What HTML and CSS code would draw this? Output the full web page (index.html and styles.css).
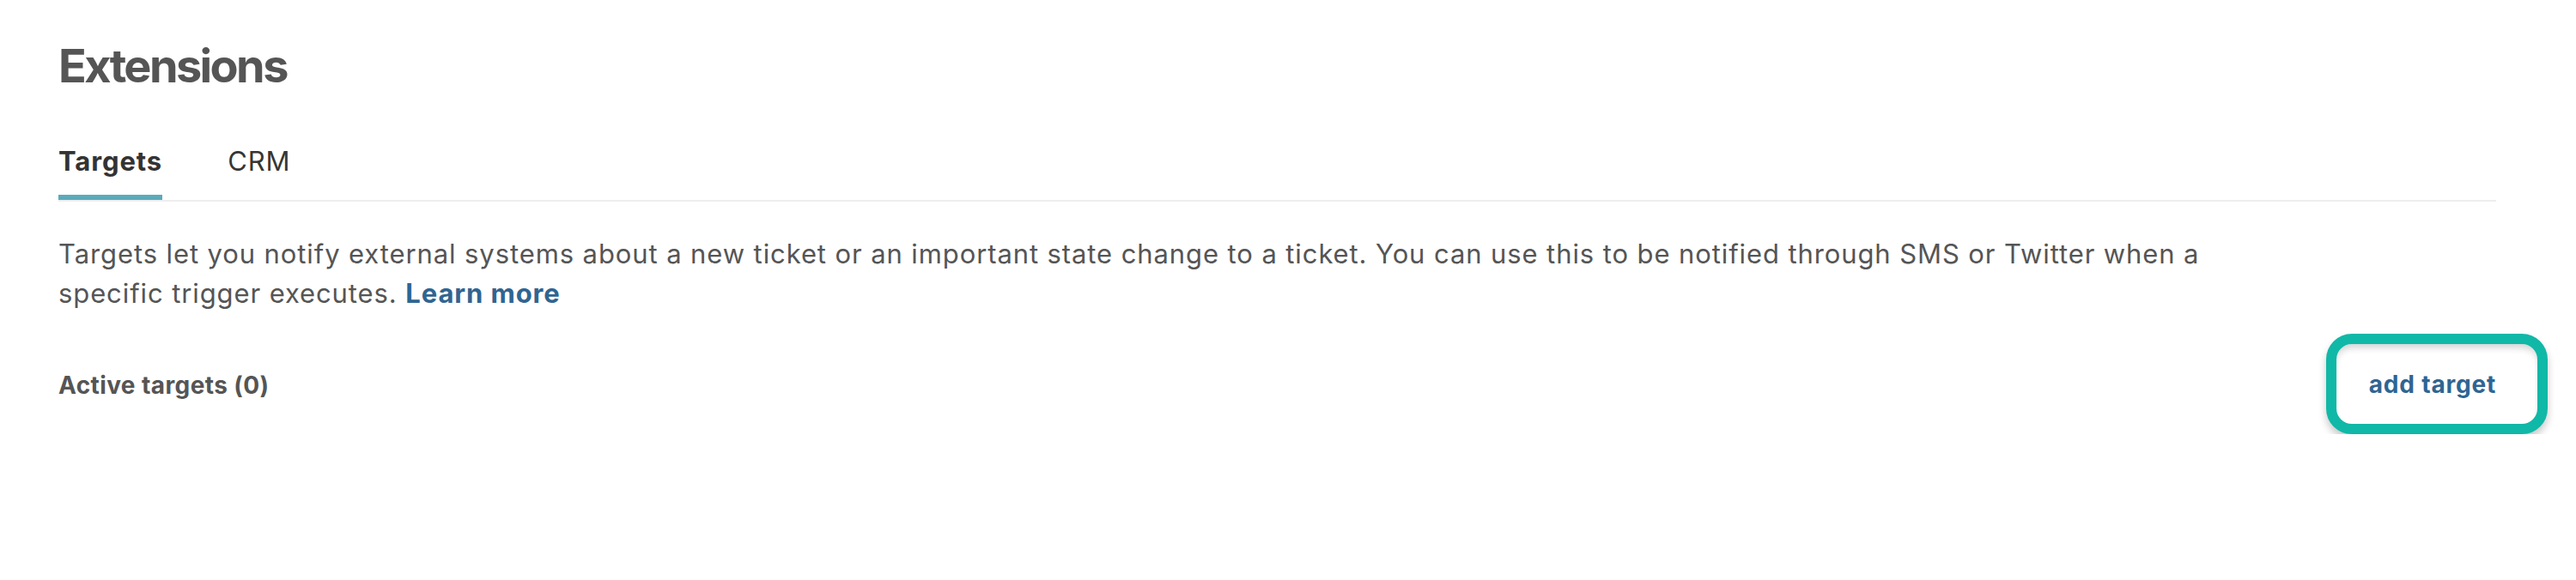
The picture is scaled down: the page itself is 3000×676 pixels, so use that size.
FILE: index.html
```html
<!DOCTYPE html>
<html lang="en">
<head>
<meta charset="utf-8">
<title>Extensions</title>
<link rel="stylesheet" href="styles.css">
</head>
<body>
<main class="page">
  <h1 class="page-title">Extensions</h1>
  <nav class="tabs">
    <a class="tab tab-active">Targets</a>
    <a class="tab">CRM</a>
  </nav>
  <p class="intro">Targets let you notify external systems about a new ticket or an important state change to a ticket. You can use this to be notified through SMS or Twitter when a specific trigger executes. <a class="link">Learn more</a></p>
  <div class="list-head">
    <span class="list-title">Active targets (0)</span>
    <button class="add-btn">add target</button>
  </div>
</main>
</body>
</html>
```

FILE: styles.css
```css
html, body {
  margin: 0;
  padding: 0;
  background: #ffffff;
}
body {
  font-family: Inter, "Noto Sans", "Liberation Sans", sans-serif;
  color: #555555;
}
.page {
  width: 2839px;
  padding: 44px 0 0 68px;
}
.page-title {
  margin: 0;
  font-size: 54px;
  line-height: 65px;
  font-weight: 700;
  letter-spacing: -2.6px;
  color: #555555;
}
.tabs {
  display: flex;
  gap: 76px;
  margin-top: 61px;
  border-bottom: 2px solid #eeeeee;
}
.tab {
  display: block;
  font-size: 31px;
  line-height: 36px;
  color: #363636;
  padding-bottom: 21px;
  border-bottom: 6px solid transparent;
  letter-spacing: 0.9px;
}
.tab-active {
  font-weight: 700;
  color: #333333;
  border-bottom-color: #5aaabb;
}
.intro {
  margin: 38px 0 0;
  max-width: 2600px;
  font-size: 31px;
  line-height: 46px;
  color: #555555;
  letter-spacing: 0.9px;
}
.link {
  color: #2f6592;
  font-weight: 700;
}
.list-head {
  display: flex;
  align-items: center;
  justify-content: space-between;
  margin-top: 24px;
}
.list-title {
  font-size: 28px;
  font-weight: 700;
  color: #555555;
  letter-spacing: 0.4px;
  padding-top: 2px;
}
.add-btn {
  margin-right: -60px;
  height: 117px;
  padding: 0 48px 0 38px;
  border: 12px solid #10b8a7;
  border-radius: 30px;
  background: #ffffff;
  font-family: Inter, "Noto Sans", "Liberation Sans", sans-serif;
  font-size: 28px;
  font-weight: 700;
  letter-spacing: 0.8px;
  color: #2f6592;
  box-shadow: 0 6px 10px rgba(0, 0, 0, 0.22), inset 0 7px 8px -3px rgba(0, 0, 0, 0.18);
}
```
